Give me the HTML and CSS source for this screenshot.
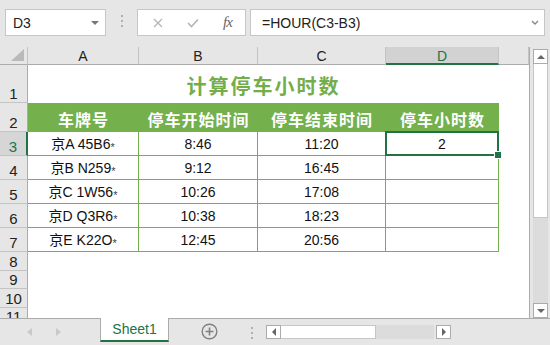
FILE: index.html
```html
<!DOCTYPE html>
<html lang="zh">
<head>
  <meta charset="UTF-8">
  <title>计算停车小时数</title>
  <link rel="stylesheet" href="styles.css">
</head>
<body>
<div class="toolbar">
  <div class="namebox">
    <span>D3</span>
    <svg width="8" height="4" viewBox="0 0 8 4"><path d="M0 0h8L4 4z" fill="#777"/></svg>
  </div>
  <div class="grip"><i></i><i></i><i></i></div>
  <div class="fxbox">
    <span class="fx-btn">
      <svg width="10" height="10" viewBox="0 0 10 10"><path d="M1 1l8 8M9 1l-8 8" stroke="#b4b4b4" stroke-width="1.3"/></svg>
    </span>
    <span class="fx-btn">
      <svg width="12" height="10" viewBox="0 0 12 10"><path d="M1 5l3.5 3.5L11 1.5" stroke="#b4b4b4" stroke-width="1.6" fill="none"/></svg>
    </span>
    <span class="fx-btn fx-text">fx</span>
  </div>
  <div class="formula">
    <span>=HOUR(C3-B3)</span>
    <svg width="8" height="5" viewBox="0 0 8 5"><path d="M1 1l3 3 3-3" stroke="#888" stroke-width="1.4" fill="none"/></svg>
  </div>
</div>

<div class="main">
  <div class="sheet">
    <!-- 列标题 -->
    <div class="corner"><svg width="13" height="12" viewBox="0 0 13 12"><path d="M13 0v12H0z" fill="#b9b9b9"/></svg></div>
    <div class="colhead">A</div>
    <div class="colhead">B</div>
    <div class="colhead">C</div>
    <div class="colhead active">D</div>
    <div class="colhead"></div>

    <!-- 第1行 标题 -->
    <div class="rowhead">1</div>
    <div class="title">计算停车小时数</div>
    <div class="blank"></div>

    <!-- 第2行 表头 -->
    <div class="rowhead">2</div>
    <div class="th">车牌号</div>
    <div class="th">停车开始时间</div>
    <div class="th">停车结束时间</div>
    <div class="th">停车小时数</div>
    <div class="blank"></div>

    <div class="rowhead active">3</div>
    <div class="td">京A 45B6<span class="star">*</span></div>
    <div class="td">8:46</div>
    <div class="td">11:20</div>
    <div class="td sel">2</div>
    <div class="blank"></div>

    <div class="rowhead">4</div>
    <div class="td">京B N259<span class="star">*</span></div>
    <div class="td">9:12</div>
    <div class="td">16:45</div>
    <div class="td"></div>
    <div class="blank"></div>

    <div class="rowhead">5</div>
    <div class="td">京C 1W56<span class="star">*</span></div>
    <div class="td">10:26</div>
    <div class="td">17:08</div>
    <div class="td"></div>
    <div class="blank"></div>

    <div class="rowhead">6</div>
    <div class="td">京D Q3R6<span class="star">*</span></div>
    <div class="td">10:38</div>
    <div class="td">18:23</div>
    <div class="td"></div>
    <div class="blank"></div>

    <div class="rowhead">7</div>
    <div class="td">京E K22O<span class="star">*</span></div>
    <div class="td">12:45</div>
    <div class="td">20:56</div>
    <div class="td"></div>
    <div class="blank"></div>

    <div class="rowhead">8</div>
    <div class="empty"></div>
    <div class="rowhead">9</div>
    <div class="empty"></div>
    <div class="rowhead">10</div>
    <div class="empty"></div>
    <div class="rowhead">11</div>
    <div class="empty"></div>
  </div>

  <div class="vscroll">
    <div class="sbtn">
      <svg width="8" height="4" viewBox="0 0 8 4"><path d="M0 4h8L4 0z" fill="#666"/></svg>
    </div>
    <div class="vthumb"></div>
    <div class="track"></div>
    <div class="sbtn">
      <svg width="8" height="4" viewBox="0 0 8 4"><path d="M0 0h8L4 4z" fill="#666"/></svg>
    </div>
  </div>
</div>

<div class="tabbar">
  <div class="tabnav">
    <svg width="5" height="8" viewBox="0 0 5 8"><path d="M5 0v8L0 4z" fill="#c8c8c8"/></svg>
    <svg width="5" height="8" viewBox="0 0 5 8"><path d="M0 0v8l5-4z" fill="#c8c8c8"/></svg>
  </div>
  <div class="tab">Sheet1</div>
  <div class="addsheet">
    <svg width="17" height="17" viewBox="0 0 17 17">
      <circle cx="8.5" cy="8.5" r="7.3" stroke="#808080" stroke-width="1.4" fill="none"/>
      <path d="M8.5 4.5v8M4.5 8.5h8" stroke="#808080" stroke-width="1.6"/>
    </svg>
  </div>
  <div class="grip hgrip"><i></i><i></i><i></i></div>
  <div class="hscroll">
    <div class="sbtn">
      <svg width="4" height="8" viewBox="0 0 4 8"><path d="M4 0v8L0 4z" fill="#666"/></svg>
    </div>
    <div class="hthumb"></div>
    <div class="track"></div>
    <div class="sbtn">
      <svg width="4" height="8" viewBox="0 0 4 8"><path d="M0 0v8l4-4z" fill="#666"/></svg>
    </div>
  </div>
</div>
</body>
</html>
```

FILE: styles.css
```css
* {
    box-sizing: border-box;
}

body {
    margin: 0;
    width: 550px;
    height: 345px;
    overflow: hidden;
    background: #e6e6e6;
    font-family: "Liberation Sans", "Noto Sans CJK SC", sans-serif;
    color: #111;
}

/** 编辑栏 **/
.toolbar {
    height: 47px;
    display: flex;
    align-items: flex-start;
    padding: 9px 0 0 5px;
}

.namebox {
    width: 101px;
    height: 27px;
    background: #fff;
    border: 1px solid #c6c6c6;
    display: flex;
    align-items: center;
    justify-content: space-between;
    padding: 0 6px 0 7px;
    font-size: 14px;
    color: #222;
}

.grip {
    width: 31px;
    display: flex;
    flex-direction: column;
    align-items: center;
    gap: 3px;
    padding-top: 6px;
}
.grip i {
    width: 2px;
    height: 2px;
    background: #b0b0b0;
}

.fxbox {
    width: 109px;
    height: 27px;
    background: #fff;
    border: 1px solid #c6c6c6;
    display: flex;
    align-items: center;
    padding-left: 2px;
}
.fx-btn {
    width: 36px;
    display: flex;
    justify-content: center;
    align-items: center;
}
.fx-text {
    font-family: "Liberation Serif", serif;
    font-style: italic;
    font-size: 15px;
    color: #666;
    letter-spacing: -1px;
}

.formula {
    margin-left: 4px;
    width: 295px;
    height: 27px;
    background: #fff;
    border: 1px solid #c6c6c6;
    display: flex;
    align-items: center;
    justify-content: space-between;
    padding: 0 5px 0 11px;
    font-size: 14px;
    color: #222;
}

/** 表格区域 **/
.main {
    height: 271px;
    display: flex;
}

.sheet {
    width: 530px;
    height: 271px;
    overflow: hidden;
    background: #fff;
    border-right: 1px solid #ababab;
    display: grid;
    grid-template-columns: 28px 111px 119px 128px 113px 30px;
    grid-template-rows: 18px 38px 29px 24px 24px 24px 24px 24px 19px 18px 19px 18px;
    font-size: 14px;
}

.corner {
    background: #e6e6e6;
    border-right: 1px solid #c4c4c4;
    border-bottom: 1px solid #ababab;
    display: flex;
    justify-content: flex-end;
    align-items: flex-end;
    padding: 0 3px 3px 0;
}

.colhead {
    background: #e6e6e6;
    border-right: 1px solid #c4c4c4;
    border-bottom: 1px solid #ababab;
    text-align: center;
    line-height: 18px;
    color: #222;
}
.colhead.active {
    background: #d2d2d2;
    border-bottom: 2px solid #217346;
    color: #217346;
}

.rowhead {
    background: #e6e6e6;
    border-right: 1px solid #ababab;
    border-bottom: 1px solid #c4c4c4;
    display: flex;
    justify-content: center;
    align-items: flex-end;
    font-size: 15px;
    line-height: 17px;
    color: #222;
}
.rowhead.active {
    background: #d6d6d6;
    border-right: 2px solid #217346;
    color: #217346;
}

.title {
    grid-column: span 4;
    display: flex;
    justify-content: center;
    align-items: center;
    padding-top: 2px;
    font-family: "Noto Sans CJK SC", sans-serif;
    font-weight: bold;
    font-size: 20px;
    letter-spacing: 2px;
    color: #74ad4a;
}

.th {
    background: #74b04b;
    color: #fff;
    font-family: "Noto Sans CJK SC", sans-serif;
    font-weight: bold;
    font-size: 16px;
    letter-spacing: 1px;
    display: flex;
    justify-content: center;
    align-items: center;
    padding-top: 3px;
}

.td {
    border-right: 1px solid #74b04b;
    border-bottom: 1px solid #74b04b;
    display: flex;
    justify-content: center;
    align-items: flex-end;
    line-height: 18px;
    padding-bottom: 2px;
}

.star {
    font-size: 11px;
    margin-bottom: -3px;
    color: #444;
}

/* 选中单元格 */
.sel {
    position: relative;
}
.sel::after {
    content: "";
    position: absolute;
    left: -1px;
    top: -1px;
    right: -1px;
    bottom: -1px;
    border: 2px solid #217346;
}
.sel::before {
    content: "";
    position: absolute;
    right: -4px;
    bottom: -4px;
    width: 6px;
    height: 6px;
    background: #217346;
    border: 1px solid #fff;
    z-index: 2;
}

.empty {
    grid-column: span 5;
}

/** 滚动条 **/
.vscroll {
    width: 15px;
    margin: 2px 0 0 3px;
    display: flex;
    flex-direction: column;
}

.sbtn {
    width: 15px;
    height: 15px;
    flex: none;
    background: #fff;
    border: 1px solid #ababab;
    display: flex;
    justify-content: center;
    align-items: center;
}

.vthumb {
    height: 154px;
    background: #fff;
    border: 1px solid #c6c6c6;
    border-top: none;
}

.track {
    flex: 1;
    background: #dcdcdc;
}

/** 工作表标签 **/
.tabbar {
    height: 27px;
    border-top: 1px solid #ababab;
    display: flex;
    align-items: flex-start;
}

.tabnav {
    width: 100px;
    display: flex;
    gap: 24px;
    padding: 9px 0 0 27px;
}

.tab {
    width: 69px;
    height: 24px;
    margin-top: -1px;
    background: #fff;
    border-left: 1px solid #ababab;
    border-right: 1px solid #ababab;
    border-bottom: 2px solid #217346;
    color: #217346;
    font-size: 14px;
    text-align: center;
    line-height: 23px;
}

.addsheet {
    width: 50px;
    display: flex;
    justify-content: center;
    padding-top: 4px;
    margin-left: 15px;
}

.hgrip {
    width: 28px;
    margin-left: 4px;
    padding-top: 8px;
}

.hscroll {
    width: 185px;
    height: 14px;
    margin-top: 6px;
    display: flex;
}
.hscroll .sbtn {
    height: 14px;
}
.hthumb {
    width: 95px;
    background: #fff;
    border: 1px solid #c6c6c6;
    border-left: none;
}
.hscroll .track {
    margin-right: 2px;
}
```
